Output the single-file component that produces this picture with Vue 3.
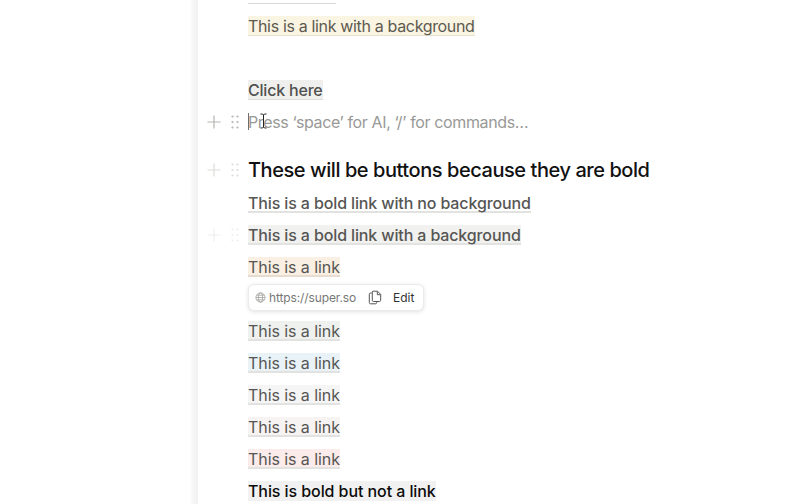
<script setup>
const top = [
  { text: 'This is a bold link with no background', cls: 'bold under' },
  { text: 'This is a bold link with a background', cls: 'bold under gray', faint: true },
  { text: 'This is a link', cls: 'medium under orange' }
]
const bottom = [
  { text: 'This is a link', cls: 'gray2' },
  { text: 'This is a link', cls: 'blue' },
  { text: 'This is a link', cls: 'lgray' },
  { text: 'This is a link', cls: 'mauve' },
  { text: 'This is a link', cls: 'pink' }
]
</script>

<template>
  <div class="page">
    <div class="strip"></div>
    <main class="doc">
      <div class="top-rule-row"><span class="top-rule"></span></div>

      <div class="row"><div class="gutter"></div><span class="link cream">This is a link with a background</span></div>
      <div class="row"></div>
      <div class="row"><div class="gutter"></div><span class="link click">Click here</span></div>

      <div class="row">
        <div class="gutter">
          <svg class="plus" viewBox="0 0 14 14"><path d="M7 0.5V13.5M0.5 7H13.5" /></svg>
          <svg class="dots" viewBox="0 0 8 14"><circle cx="1.5" cy="1.5" r="1.1"/><circle cx="6.5" cy="1.5" r="1.1"/><circle cx="1.5" cy="7" r="1.1"/><circle cx="6.5" cy="7" r="1.1"/><circle cx="1.5" cy="12.5" r="1.1"/><circle cx="6.5" cy="12.5" r="1.1"/></svg>
        </div>
        <span class="placeholder"><i class="caret"></i>Press ‘space’ for AI, ‘/’ for commands…
          <svg class="ibeam" viewBox="0 0 9 16"><path d="M1.5 1H3.5L4.5 2L5.5 1H7.5M4.5 2V14M1.5 15H3.5L4.5 14L5.5 15H7.5" /></svg>
        </span>
      </div>

      <div class="row heading-row">
        <div class="gutter faint">
          <svg class="plus" viewBox="0 0 14 14"><path d="M7 0.5V13.5M0.5 7H13.5" /></svg>
          <svg class="dots" viewBox="0 0 8 14"><circle cx="1.5" cy="1.5" r="1.1"/><circle cx="6.5" cy="1.5" r="1.1"/><circle cx="1.5" cy="7" r="1.1"/><circle cx="6.5" cy="7" r="1.1"/><circle cx="1.5" cy="12.5" r="1.1"/><circle cx="6.5" cy="12.5" r="1.1"/></svg>
        </div>
        <h2>These will be buttons because they are bold</h2>
      </div>

      <div class="list">
        <div v-for="item in top" :key="item.cls" class="row">
          <div class="gutter" :class="{ fainter: item.faint }">
            <template v-if="item.faint">
              <svg class="plus" viewBox="0 0 14 14"><path d="M7 0.5V13.5M0.5 7H13.5" /></svg>
              <svg class="dots" viewBox="0 0 8 14"><circle cx="1.5" cy="1.5" r="1.1"/><circle cx="6.5" cy="1.5" r="1.1"/><circle cx="1.5" cy="7" r="1.1"/><circle cx="6.5" cy="7" r="1.1"/><circle cx="1.5" cy="12.5" r="1.1"/><circle cx="6.5" cy="12.5" r="1.1"/></svg>
            </template>
          </div>
          <span class="link" :class="item.cls">{{ item.text }}</span>
        </div>

        <div class="row popover-row">
          <div class="gutter"></div>
          <div class="popover">
            <svg class="globe" viewBox="0 0 12 12"><circle cx="6" cy="6" r="5"/><ellipse cx="6" cy="6" rx="2.2" ry="5"/><path d="M1 6H11M1.8 3.5H10.2M1.8 8.5H10.2"/></svg>
            <span class="url">https://super.so</span>
            <svg class="copy" viewBox="0 0 14 15"><path d="M3.8 3H2.5C1.8 3 1.3 3.5 1.3 4.2V12.5C1.3 13.3 1.8 13.8 2.5 13.8H7.5C8.2 13.8 8.7 13.3 8.7 12.5V11.5"/><path d="M5 1.2H9.5L12.7 4.4V10.3C12.7 11 12.2 11.5 11.5 11.5H5.5C4.8 11.5 4.3 11 4.3 10.3V2C4.3 1.5 4.6 1.2 5 1.2Z"/><path d="M9.3 1.5V4.7H12.4"/></svg>
            <span class="edit">Edit</span>
          </div>
        </div>

        <div v-for="item in bottom" :key="item.cls" class="row">
          <div class="gutter"></div>
          <span class="link medium under" :class="item.cls">{{ item.text }}</span>
        </div>

        <div class="row"><div class="gutter"></div><span class="link boldplain">This is bold but not a link</span></div>
      </div>
    </main>
  </div>
</template>

<style scoped>
.page {
  display: flex;
  width: 808px;
  height: 504px;
  overflow: hidden;
  background: #fff;
  font-family: Inter, "Liberation Sans", sans-serif;
}
.strip {
  flex: none;
  width: 8px;
  margin-left: 190px;
  background: linear-gradient(90deg, #fff 0%, #f6f6f6 40%, #f2f2f2 100%);
}
.doc {
  flex: 1;
  min-width: 0;
}
.top-rule-row {
  height: 10px;
  padding: 3px 0 0 50px;
  box-sizing: border-box;
}
.top-rule {
  display: block;
  width: 88px;
  height: 1px;
  background: #d9d9d6;
}
.row {
  display: flex;
  align-items: center;
  height: 32px;
  flex: none;
}
.gutter {
  flex: none;
  width: 50px;
  height: 100%;
  display: flex;
  align-items: center;
  padding-left: 9px;
  box-sizing: border-box;
}
.plus {
  width: 14px;
  height: 14px;
  fill: none;
  stroke: #b5b5b3;
  stroke-width: 1.2;
}
.dots {
  width: 8px;
  height: 14px;
  margin-left: 10px;
  fill: #b5b5b3;
}
.faint .plus { stroke: #dcdcda; }
.faint .dots { fill: #dcdcda; }
.fainter .plus { stroke: #eeeeed; }
.fainter .dots { fill: #eeeeed; }
.link {
  font-size: 16px;
  line-height: 20px;
  color: #565654;
  white-space: nowrap;
  box-sizing: border-box;
}
.cream {
  background: #faf4e3;
  border-bottom: 1px solid #e6dfcc;
  height: 20px;
  color: #5d5a50;
  letter-spacing: -0.34px;
}
.click {
  background: #eff0ee;
  border-bottom: 1px solid #dcdcda;
  font-weight: 500;
  height: 20px;
  color: #50504e;
  letter-spacing: -0.2px;
}
.placeholder {
  position: relative;
  font-size: 16px;
  letter-spacing: -0.37px;
  color: #999997;
  white-space: nowrap;
}
.caret {
  position: absolute;
  left: 0;
  top: 1px;
  width: 1px;
  height: 17px;
  background: #6f6f6f;
}
.ibeam {
  position: absolute;
  left: 11px;
  top: 1px;
  width: 9px;
  height: 16px;
  fill: none;
  stroke: #222;
  stroke-width: 1;
}
.heading-row {
  margin-top: 16px;
}
h2 {
  margin: 0;
  font-size: 20px;
  font-weight: 500;
  line-height: 32px;
  letter-spacing: -0.44px;
  color: #111;
  white-space: nowrap;
}
.list {
  margin-top: 1px;
}
.bold { font-weight: 500; letter-spacing: -0.13px; }
.medium { font-weight: 400; letter-spacing: -0.07px; }
.under {
  height: 20px;
  border-bottom: 2px solid #e2e2e0;
}
.gray { background: #f1f1ef; }
.orange { background: #faefe3; border-bottom-color: #e6dccf; }
.gray2 { background: #eff1ef; }
.blue { background: #e9f3f7; }
.lgray { background: #f6f5f5; }
.mauve { background: #f8f3f3; }
.pink { background: #fbebea; }
.boldplain {
  background: #f1f1f1;
  font-weight: 500;
  color: #0c0c0c;
  height: 20px;
  letter-spacing: -0.08px;
}
.popover-row {
  align-items: flex-start;
}
.popover {
  display: flex;
  align-items: center;
  width: 176px;
  height: 27px;
  margin-top: 1px;
  padding: 0 7px 0 6px;
  box-sizing: border-box;
  background: #fff;
  border: 1px solid #ebebea;
  border-radius: 6px;
  box-shadow: 0 1px 4px rgba(0, 0, 0, 0.12);
  font-size: 12px;
}
.globe {
  flex: none;
  width: 11px;
  height: 11px;
  fill: none;
  stroke: #9a9a98;
  stroke-width: 0.8;
}
.url {
  margin-left: 3px;
  color: #777775;
  letter-spacing: -0.01em;
}
.copy {
  flex: none;
  width: 14px;
  height: 15px;
  margin-left: 12px;
  fill: none;
  stroke: #555;
  stroke-width: 1;
}
.edit {
  margin-left: 11px;
  color: #333;
}
</style>

<style>
html, body { margin: 0; background: #fff; }
</style>
